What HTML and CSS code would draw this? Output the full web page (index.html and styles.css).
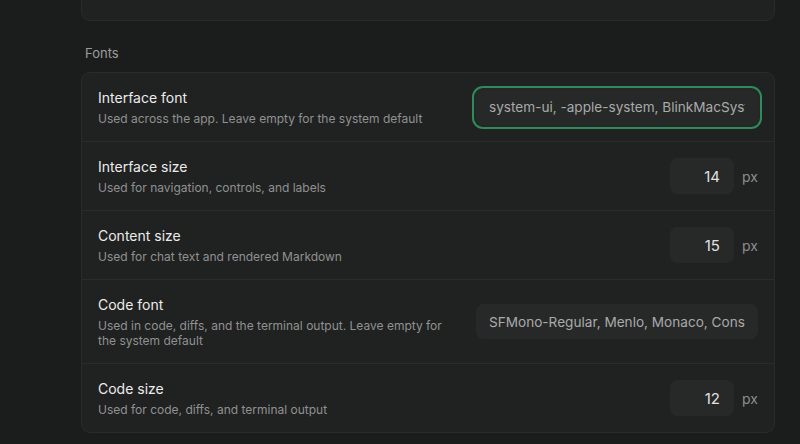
FILE: index.html
```html
<!DOCTYPE html>
<html lang="en">
<head>
<meta charset="utf-8">
<title>Settings — Appearance</title>
<link rel="stylesheet" href="styles.css">
</head>
<body>
<main class="settings">
  <div class="card card-tail"></div>

  <section class="group">
    <h2 class="group-title">Fonts</h2>
    <div class="card">
      <div class="row">
        <div class="row-text">
          <div class="row-title">Interface font</div>
          <div class="row-desc">Used across the app. Leave empty for the system default</div>
        </div>
        <input class="field field-wide is-focused" type="text" value="system-ui, -apple-system, BlinkMacSystemFont, &quot;Segoe UI&quot;, Roboto, sans-serif">
      </div>

      <div class="row">
        <div class="row-text">
          <div class="row-title">Interface size</div>
          <div class="row-desc">Used for navigation, controls, and labels</div>
        </div>
        <div class="size-control">
          <input class="field field-num" type="text" value="14">
          <span class="unit">px</span>
        </div>
      </div>

      <div class="row">
        <div class="row-text">
          <div class="row-title">Content size</div>
          <div class="row-desc">Used for chat text and rendered Markdown</div>
        </div>
        <div class="size-control">
          <input class="field field-num" type="text" value="15">
          <span class="unit">px</span>
        </div>
      </div>

      <div class="row">
        <div class="row-text">
          <div class="row-title">Code font</div>
          <div class="row-desc">Used in code, diffs, and the terminal output. Leave empty for the system default</div>
        </div>
        <input class="field field-wide" type="text" value="SFMono-Regular, Menlo, Monaco, Consolas, monospace">
      </div>

      <div class="row">
        <div class="row-text">
          <div class="row-title">Code size</div>
          <div class="row-desc">Used for code, diffs, and terminal output</div>
        </div>
        <div class="size-control">
          <input class="field field-num" type="text" value="12">
          <span class="unit">px</span>
        </div>
      </div>
    </div>
  </section>
</main>
</body>
</html>
```

FILE: styles.css
```css
html, body {
  margin: 0;
  padding: 0;
  height: 100%;
  background: #1b1c1c;
  overflow: hidden;
}

body {
  font-family: Inter, "Noto Sans", "Liberation Sans", sans-serif;
  color: #e6e6e6;
  -webkit-font-smoothing: antialiased;
}

.settings {
  width: 694px;
  margin-left: 81px;
}

.card {
  background: #202121;
  border: 1px solid #2a2b2b;
  border-radius: 9px;
}

/* bottom of the section above, scrolled mostly out of view */
.card-tail {
  height: 20px;
  border-top: none;
  border-radius: 0 0 9px 9px;
}

.group {
  margin-top: 24px;
}

.group-title {
  margin: 0 0 10px 4px;
  font-size: 13px;
  line-height: 17px;
  font-weight: 400;
  color: #9b9c9c;
}

.row {
  display: flex;
  align-items: center;
  gap: 24px;
  padding: 15px 16px;
  border-bottom: 1px solid #2a2b2b;
}

.row:last-child {
  border-bottom: none;
}

.row-text {
  flex: 1;
  min-width: 0;
}

.row-title {
  font-size: 14px;
  line-height: 20px;
  color: #ececec;
}

.row-desc {
  margin-top: 3px;
  font-size: 12px;
  line-height: 15px;
  color: #909191;
}

.field {
  box-sizing: border-box;
  border: 1px solid #272828;
  background: #272828;
  border-radius: 7px;
  font-family: Inter, "Noto Sans", "Liberation Sans", sans-serif;
  font-size: 14px;
  color: #e2e2e2;
  outline: none;
  margin: 0;
}

.field-wide {
  flex: none;
  width: 282px;
  height: 35px;
  padding: 0 12px;
  font-size: 13.6px;
  color: #a9aaaa;
}

.field-wide.is-focused {
  box-shadow: 0 0 0 2px #252626, 0 0 0 4px #2e8b5b;
}

.size-control {
  display: flex;
  align-items: center;
  gap: 8px;
}

.field-num {
  width: 64px;
  height: 36px;
  padding: 0 13px;
  text-align: right;
  font-size: 15px;
  color: #e0e0e0;
}

.unit {
  width: 16px;
  font-size: 14px;
  color: #8d8e8e;
}
```
